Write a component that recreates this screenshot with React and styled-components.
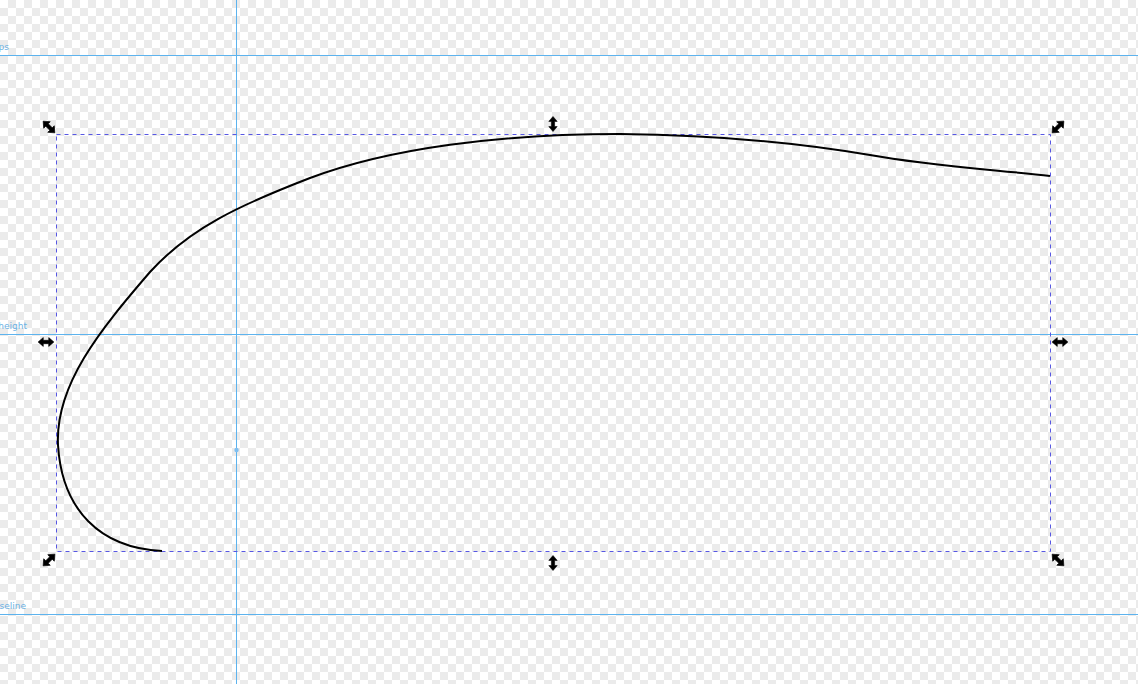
import React from "react";
import styled, { createGlobalStyle } from "styled-components";

const Global = createGlobalStyle`
  html, body { margin: 0; padding: 0; overflow: hidden; background: #fff; }
  body { font-family: "DejaVu Sans", sans-serif; }
`;

const Canvas = styled.div`
  position: relative;
  width: 1138px;
  height: 684px;
  overflow: hidden;
  background: repeating-conic-gradient(#ebebeb 0% 25%, #ffffff 0% 50%) ${(p) => p.$ox}px ${(p) => p.$oy}px / 16px 16px;
`;

const HGuide = styled.div`
  position: absolute;
  left: 0;
  right: 0;
  top: ${(p) => p.$y}px;
  height: 1px;
  background: #5db3ee;
`;

const VGuide = styled.div`
  position: absolute;
  top: 0;
  bottom: 0;
  left: ${(p) => p.$x}px;
  width: 1px;
  background: #5db3ee;
`;

const GuideLabel = styled.span`
  position: absolute;
  right: calc(100% - ${(p) => p.$end}px);
  top: ${(p) => p.$y}px;
  font-family: "DejaVu Sans", sans-serif;
  font-size: 9px;
  line-height: 10px;
  color: #6cb2e4;
  white-space: nowrap;
`;

const Drawing = styled.svg`
  position: absolute;
  left: 0;
  top: 0;
  width: 1138px;
  height: 684px;
  pointer-events: none;
`;

const arrow = "M0,-7.5 L4.2,-2.6 L1.6,-2.6 L1.6,2.6 L4.2,2.6 L0,7.5 L-4.2,2.6 L-1.6,2.6 L-1.6,-2.6 L-4.2,-2.6 Z";

const Handle = ({ x, y, r, s = 1 }) => (
  <path
    d={arrow}
    transform={`translate(${x} ${y}) rotate(${r}) scale(${s})`}
    fill="#000"
    stroke="#000"
    strokeWidth="0.6"
    strokeLinejoin="round"
  />
);

const guides = [
  { y: 55, label: "ps", end: 9, ly: 42 },
  { y: 334, label: "height", end: 27, ly: 321 },
  { y: 614, label: "seline", end: 26, ly: 601 },
];

export default function App() {
  return (
    <>
      <Global />
      <Canvas $ox={0} $oy={0}>
        {guides.map((g) => (
          <React.Fragment key={g.label}>
            <HGuide $y={g.y} />
            <GuideLabel $end={g.end} $y={g.ly}>{g.label}</GuideLabel>
          </React.Fragment>
        ))}
        <VGuide $x={236} />
        <Drawing viewBox="0 0 1138 684">
          <circle cx="236.5" cy="450" r="2.2" fill="#7fbff0" />
          <rect
            x="56.5"
            y="134.5"
            width="994"
            height="417"
            fill="none"
            stroke="#5757e3"
            strokeWidth="1"
            strokeDasharray="4 4"
          />
          <path
            d="M162,551 C100,548 62,510 58,445 C55,385 100,330 150,272 C190,228 240,205 310,178 C390,148 500,134 620,134 C720,135 800,143 870,155 C930,166 1000,170 1050,176"
            fill="none"
            stroke="#000"
            strokeWidth="2"
          />
          <Handle x={49} y={127} r={-45} s={1.1} />
          <Handle x={1058} y={127} r={45} s={1.1} />
          <Handle x={49} y={560} r={45} s={1.1} />
          <Handle x={1058} y={560} r={-45} s={1.1} />
          <Handle x={553} y={124} r={0} />
          <Handle x={553} y={563} r={0} />
          <Handle x={46} y={342} r={90} s={1.05} />
          <Handle x={1060} y={342} r={90} s={1.05} />
        </Drawing>
      </Canvas>
    </>
  );
}
